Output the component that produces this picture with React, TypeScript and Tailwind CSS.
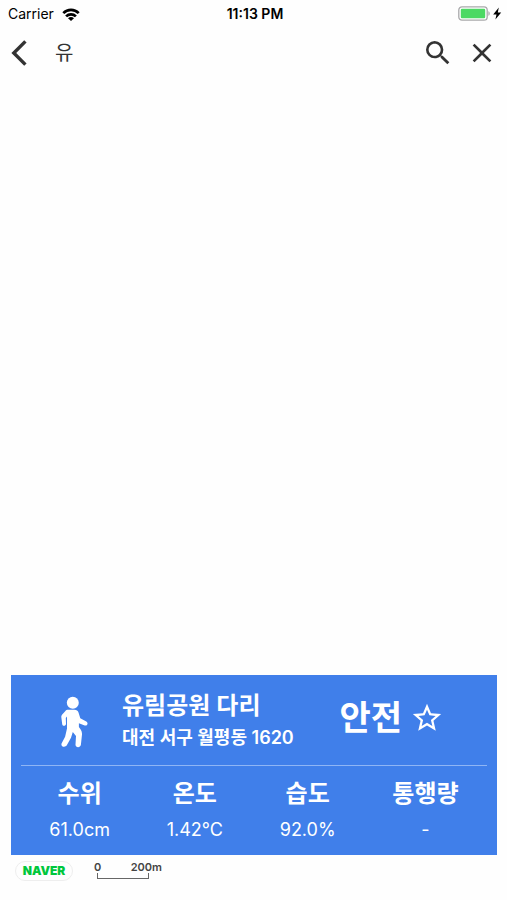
import React, { useState } from 'react';
import { MdClose, MdSearch, MdStarBorder } from 'react-icons/md';

interface Measurement {
  label: string;
  value: string;
}

interface Place {
  name: string;
  address: string;
  status: string;
  measurements: Measurement[];
}

const place: Place = {
  name: '유림공원 다리',
  address: '대전 서구 월평동 1620',
  status: '안전',
  measurements: [
    { label: '수위', value: '61.0cm' },
    { label: '온도', value: '1.42°C' },
    { label: '습도', value: '92.0%' },
    { label: '통행량', value: '-' }
  ]
};

const WifiIcon: React.FC = () => (
  <svg viewBox="0 0 18 13" className="w-[18px] h-[13px]" fill="none" stroke="#000" strokeWidth="2.7" aria-hidden="true">
    <path d="M1.3 5.1C5.6 .8 12.4 .8 16.7 5.1" />
    <path d="M4.1 8.4C6.8 5.7 11.2 5.7 13.9 8.4" />
    <path d="M9 13L6 10.2C7.8 8.7 10.2 8.7 12 10.2Z" fill="#000" stroke="none" />
  </svg>
);

const BatteryIcon: React.FC = () => (
  <svg viewBox="0 0 44 15" className="w-[44px] h-[15px]" aria-hidden="true">
    <rect x=".8" y=".8" width="28.4" height="13.4" rx="3.2" fill="#fff" stroke="#a9a9ab" strokeWidth="1.3" />
    <rect x="2.8" y="2.8" width="24.4" height="9.4" rx="1.2" fill="#4cd964" />
    <path d="M30.4 5.2C32.2 5.8 32.2 9.2 30.4 9.8Z" fill="#a9a9ab" />
    <path d="M40.8 1.5L35.2 8.4H38.5L37.4 13.5L43.2 6.4H39.8Z" fill="#000" />
  </svg>
);

const BackIcon: React.FC = () => (
  <svg viewBox="0 0 16 26" className="w-4 h-[26px]" fill="none" stroke="#333" strokeWidth="3.4" aria-hidden="true">
    <path d="M14.4 1.4L2.8 13L14.4 24.6" />
  </svg>
);

const WalkIcon: React.FC = () => (
  <svg viewBox="0 0 28 52" className="w-7 h-[52px]" fill="#fff" aria-hidden="true">
    <circle cx="12.8" cy="6.8" r="6" />
    <path d="M8.2 13.8H14.4C16.6 13.8 17.9 14.8 18.5 16.5L20.3 22.3L26.3 25.6C28.7 27 27.3 30.3 24.7 29.5L18.9 27.3V31C20.4 32.9 22.3 35.2 22 38.6L20.9 48.8C20.4 52.1 15.2 51.8 15.5 48.5L16 39.9L12.8 35.9L11 41.8L6.8 49.3C4.7 52.3 .2 50.2 1.7 47.2L5.1 40.8L7 32.5V20.5L5.8 22L6 28C5.9 30.3 2.6 30.5 2.2 28.3L1.3 21C1.2 20.1 1.5 19.4 2 18.7L5.2 15.2C6 14.3 6.9 13.8 8.2 13.8Z" />
  </svg>
);

const StatusBar: React.FC = () => (
  <div className="grid grid-cols-3 items-center h-7 pl-2 pr-[5px] text-black">
    <div className="flex items-center gap-2 text-[14px] leading-5">
      <span>Carrier</span>
      <WifiIcon />
    </div>
    <time className="text-center text-[14px] leading-5 font-semibold whitespace-nowrap">11:13 PM</time>
    <div className="flex justify-end pb-[2px]">
      <BatteryIcon />
    </div>
  </div>
);

const SearchHeader: React.FC = () => {
  const [query, setQuery] = useState('유');

  return (
    <header className="flex items-center h-[49px] pl-[11px] pr-[9px] text-[#333]">
      <button type="button" aria-label="뒤로">
        <BackIcon />
      </button>
      <input
        type="text"
        aria-label="장소 검색"
        value={query}
        onChange={(e) => setQuery(e.target.value)}
        className="flex-1 min-w-0 ml-7 text-[20px] leading-7 bg-transparent outline-none"
      />
      <button type="button" aria-label="검색">
        <MdSearch size={32} />
      </button>
      <button type="button" aria-label="지우기" onClick={() => setQuery('')} className="ml-3">
        <MdClose size={32} />
      </button>
    </header>
  );
};

const PlaceCard: React.FC<{ place: Place }> = ({ place }) => (
  <section className="ml-[11px] mr-[10px] h-[180px] px-[10px] bg-[#407fea] text-white">
    <div className="flex items-center h-[90px] pt-1">
      <div className="flex justify-center w-[101px] pl-1">
        <WalkIcon />
      </div>
      <div className="flex-1">
        <h1 className="text-[24px] leading-8 font-semibold">{place.name}</h1>
        <p className="text-[18px] leading-8 font-semibold">{place.address}</p>
      </div>
      <div className="flex items-center gap-2 mr-[43px] pb-2">
        <strong className="text-[34px] leading-10 font-semibold">{place.status}</strong>
        <button type="button" aria-label="즐겨찾기">
          <MdStarBorder size={34} />
        </button>
      </div>
    </div>

    {/* Sensor readings */}
    <dl className="flex justify-around h-[90px] pt-3 border-t border-[#8fb5f5] text-center">
      {place.measurements.map((item) => (
        <div key={item.label}>
          <dt className="text-[24px] leading-8 font-semibold">{item.label}</dt>
          <dd className="mt-2 text-[18px] leading-6">{item.value}</dd>
        </div>
      ))}
    </dl>
  </section>
);

const MapFooter: React.FC = () => (
  <footer className="flex items-start h-[45px] pl-[15px] pt-[6px]">
    <span className="flex items-center justify-center w-[58px] h-5 rounded-full border border-[#eee] text-[12px] leading-4 font-black text-[#00c73c]">
      NAVER
    </span>
    <div className="ml-[21px] w-[68px] text-[11px] leading-3 font-semibold text-[#444]">
      <div className="flex justify-between">
        <span>0</span>
        <span>200m</span>
      </div>
      <div className="ml-[3px] w-[52px] h-[6px] border border-t-0 border-[#666]" />
    </div>
  </footer>
);

const App: React.FC = () => {
  return (
    <div className="flex flex-col min-h-screen bg-[#fefefe] font-['Inter','Noto_Sans_CJK_KR',sans-serif]">
      <StatusBar />
      <SearchHeader />
      <main className="flex flex-col flex-1 justify-end">
        <PlaceCard place={place} />
      </main>
      <MapFooter />
    </div>
  );
};

export default App;
